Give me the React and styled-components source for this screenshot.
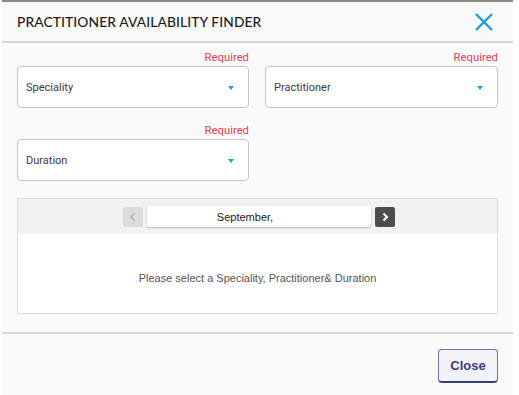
import React from "react"
import styled, { createGlobalStyle } from "styled-components"

const GlobalStyle = createGlobalStyle`
  html, body {
    margin: 0;
    padding: 0;
    background: #ffffff;
  }
  * { box-sizing: border-box; }
`

export const Dialog = styled.div`
  margin-left: 2px;
  width: 511px;
  height: 395px;
  background: #fafafa;
  border-top: 2px solid #8a8a8a;
  display: flex;
  flex-direction: column;
`

export const Header = styled.div`
  height: 41px;
  display: flex;
  align-items: center;
  justify-content: space-between;
  padding: 0 19px 0 15px;
  border-bottom: 2px solid #d6d6d6;
`

export const Title = styled.h1`
  margin: 0;
  font-family: "Lato", "Open Sans", sans-serif;
  font-size: 13.8px;
  font-weight: 500;
  letter-spacing: 0.1px;
  color: #1e1e1e;
`

export const CloseIcon = styled.button`
  border: none;
  background: none;
  padding: 0;
  width: 20px;
  height: 20px;
  display: flex;
  cursor: pointer;
`

export const Body = styled.div`
  padding: 8px 15px 0 15px;
  display: flex;
  flex-direction: column;
`

export const Grid = styled.div`
  display: grid;
  grid-template-columns: 232px 233px;
  column-gap: 16px;
  row-gap: 16px;
`

export const Field = styled.div`
  display: flex;
  flex-direction: column;
`

export const Required = styled.span`
  align-self: flex-end;
  font-family: "Roboto", sans-serif;
  font-size: 11.3px;
  line-height: 14px;
  color: #e5404e;
  margin-bottom: 1px;
`

export const Select = styled.div`
  height: 42px;
  background: #ffffff;
  border: 1px solid #c6c6c6;
  border-radius: 4px;
  display: flex;
  align-items: center;
  justify-content: space-between;
  padding: 0 14px 0 8px;
  font-family: "Roboto", sans-serif;
  font-size: 11px;
  color: #3c3c3c;
`

export const Caret = styled.span`
  width: 0;
  height: 0;
  border-left: 3px solid transparent;
  border-right: 3px solid transparent;
  border-top: 4px solid #1aa2e6;
  margin-top: 1px;
`

export const Calendar = styled.div`
  margin-top: 17px;
  height: 116px;
  border: 1px solid #dcdcdc;
  background: #ffffff;
  display: flex;
  flex-direction: column;
`

export const CalendarBar = styled.div`
  height: 35px;
  background: #f2f2f2;
  display: flex;
  align-items: center;
  justify-content: center;
  gap: 4px;
  padding-left: 3px;
`

export const NavButton = styled.button`
  width: 20px;
  height: 20px;
  border: none;
  border-radius: 2px;
  padding: 0;
  display: flex;
  align-items: center;
  justify-content: center;
  background: ${p => (p.$dark ? "#4d4d4d" : "#dcdcdc")};
`

export const Month = styled.div`
  width: 224px;
  height: 21px;
  background: #ffffff;
  border-radius: 3px;
  box-shadow: 0 1px 2px rgba(0, 0, 0, 0.25);
  display: flex;
  align-items: center;
  justify-content: center;
  padding-right: 28px;
  font-family: "Liberation Sans", Arial, sans-serif;
  font-size: 11px;
  color: #222;
`

export const Message = styled.div`
  flex: 1;
  display: flex;
  align-items: center;
  justify-content: center;
  padding-top: 8px;
  font-family: "Liberation Sans", Arial, sans-serif;
  font-size: 11px;
  color: #555;
`

export const Footer = styled.div`
  margin-top: 18px;
  border-top: 2px solid #d6d6d6;
  display: flex;
  justify-content: flex-end;
  padding: 15px 15px 0 0;
`

export const CloseButton = styled.button`
  width: 60px;
  height: 34px;
  border: 1px solid #6f72aa;
  border-bottom: 2px solid #3b3e7c;
  border-radius: 4px;
  background: #f2f2f8;
  font-family: "Liberation Sans", Arial, sans-serif;
  font-weight: bold;
  font-size: 13px;
  color: #3a3d7b;
  cursor: pointer;
`

const Chevron = ({ dir, color }) => (
  <svg width="10" height="10" viewBox="0 0 10 10">
    <path
      d={dir === "left" ? "M6.5 1.5 L3 5 L6.5 8.5" : "M3.5 1.5 L7 5 L3.5 8.5"}
      fill="none"
      stroke={color}
      strokeWidth={dir === "left" ? 1.2 : 2}
    />
  </svg>
)

const SelectField = ({ label }) => (
  <Field>
    <Required>Required</Required>
    <Select>
      {label}
      <Caret />
    </Select>
  </Field>
)

export default function App() {
  return (
    <>
      <GlobalStyle />
      <Dialog>
        <Header>
          <Title>PRACTITIONER AVAILABILITY FINDER</Title>
          <CloseIcon aria-label="close">
            <svg width="20" height="20" viewBox="0 0 20 20">
              <path d="M2 2 L18 18 M18 2 L2 18" stroke="#1a9ae0" strokeWidth="2.4" />
            </svg>
          </CloseIcon>
        </Header>
        <Body>
          <Grid>
            <SelectField label="Speciality" />
            <SelectField label="Practitioner" />
            <SelectField label="Duration" />
          </Grid>
          <Calendar>
            <CalendarBar>
              <NavButton>
                <Chevron dir="left" color="#aaaaaa" />
              </NavButton>
              <Month>September,</Month>
              <NavButton $dark>
                <Chevron dir="right" color="#ffffff" />
              </NavButton>
            </CalendarBar>
            <Message>Please select a Speciality, Practitioner&amp; Duration</Message>
          </Calendar>
        </Body>
        <Footer>
          <CloseButton>Close</CloseButton>
        </Footer>
      </Dialog>
    </>
  )
}
